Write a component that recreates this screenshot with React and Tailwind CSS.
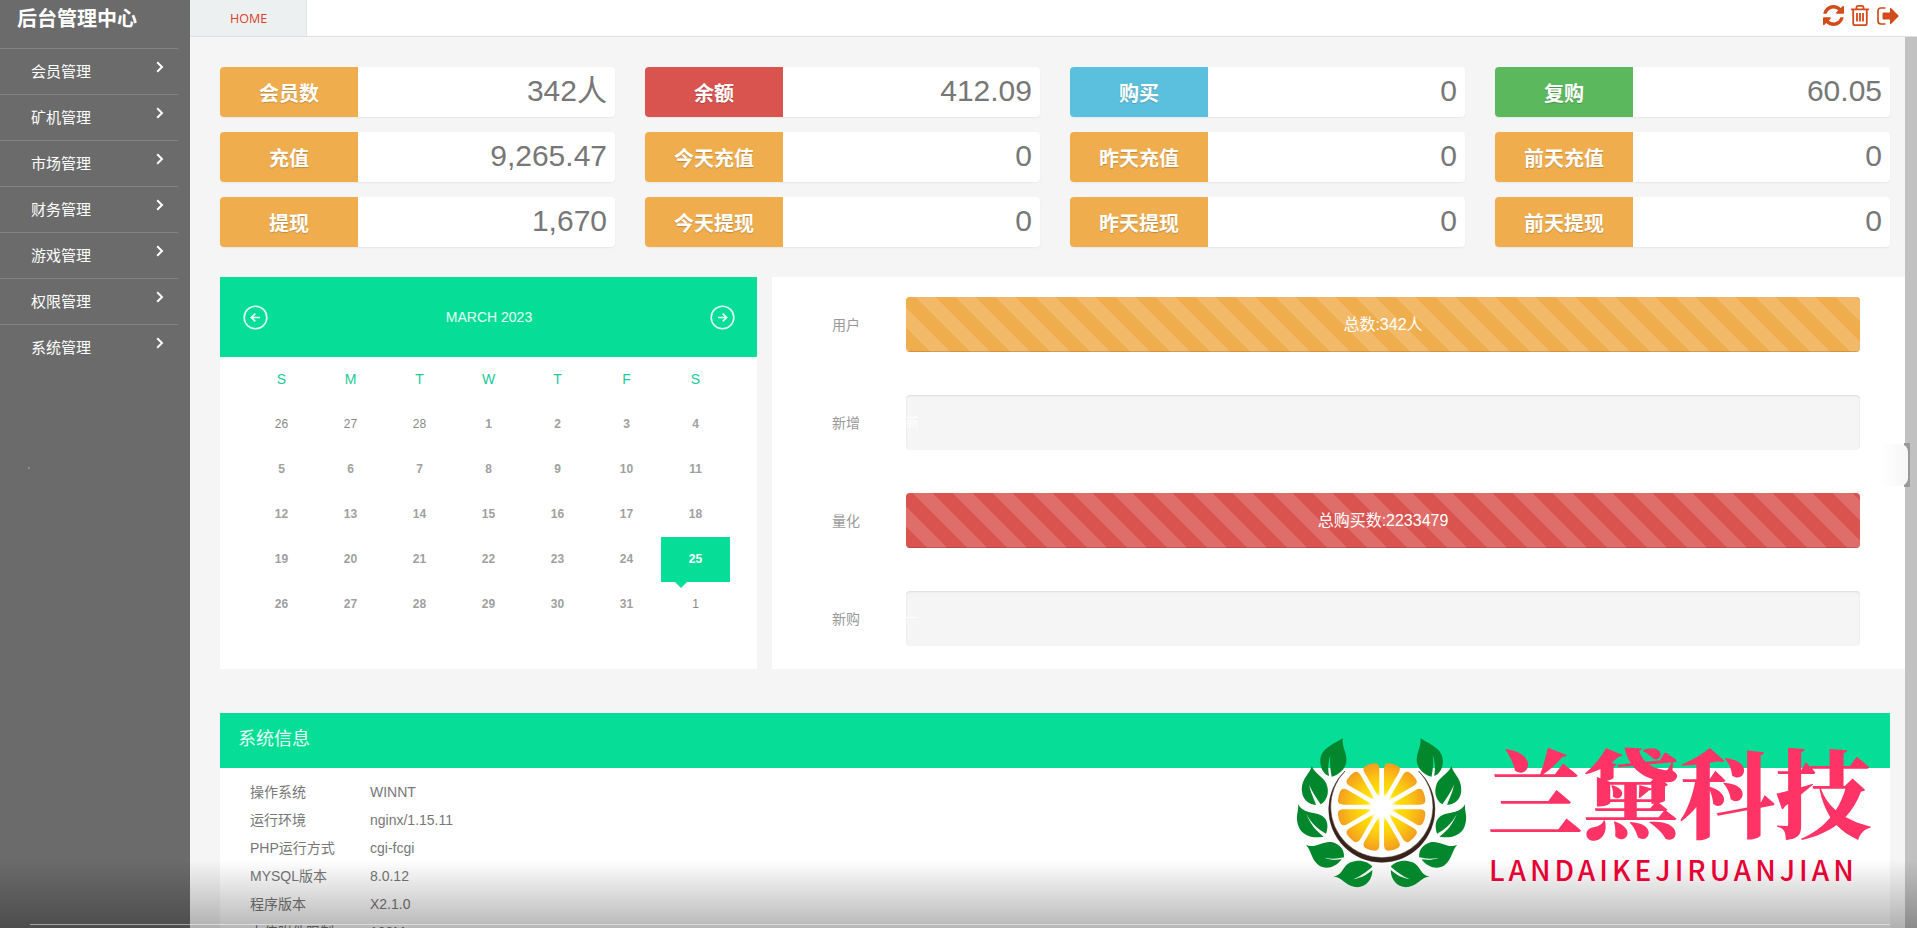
import React from "react";

const menu = ["会员管理", "矿机管理", "市场管理", "财务管理", "游戏管理", "权限管理", "系统管理"];

const stats = [
  ["会员数", "342人", "bg-[#f0ad4e]"],
  ["余额", "412.09", "bg-[#d9534f]"],
  ["购买", "0", "bg-[#5bc0de]"],
  ["复购", "60.05", "bg-[#5cb85c]"],
  ["充值", "9,265.47", "bg-[#f0ad4e]"],
  ["今天充值", "0", "bg-[#f0ad4e]"],
  ["昨天充值", "0", "bg-[#f0ad4e]"],
  ["前天充值", "0", "bg-[#f0ad4e]"],
  ["提现", "1,670", "bg-[#f0ad4e]"],
  ["今天提现", "0", "bg-[#f0ad4e]"],
  ["昨天提现", "0", "bg-[#f0ad4e]"],
  ["前天提现", "0", "bg-[#f0ad4e]"],
];

const days = [
  26, 27, 28, 1, 2, 3, 4, 5, 6, 7, 8, 9, 10, 11, 12, 13, 14, 15, 16, 17, 18, 19, 20, 21, 22, 23, 24,
  25, 26, 27, 28, 29, 30, 31, 1,
];

const info = [
  ["操作系统", "WINNT"],
  ["运行环境", "nginx/1.15.11"],
  ["PHP运行方式", "cgi-fcgi"],
  ["MYSQL版本", "8.0.12"],
  ["程序版本", "X2.1.0"],
  ["上传附件限制", "100M"],
];

const stripes =
  "bg-[linear-gradient(45deg,rgba(255,255,255,.15)_25%,transparent_25%,transparent_50%,rgba(255,255,255,.15)_50%,rgba(255,255,255,.15)_75%,transparent_75%,transparent)] bg-[length:40px_40px]";

function Chevron() {
  return (
    <svg className="h-3 w-2" viewBox="0 0 8 12" fill="none" stroke="#fff" strokeWidth="2">
      <path d="M1.2 1.2 6 6 1.2 10.8" />
    </svg>
  );
}

function CircleArrow({ flip }) {
  return (
    <svg className={flip ? "size-[25px] -scale-x-100" : "size-[25px]"} viewBox="0 0 25 25" fill="none" stroke="#e6fff5">
      <circle cx="12.5" cy="12.5" r="11.3" strokeWidth="1.6" />
      <path d="M17 12.5H8.8M12.3 8.6 8.4 12.5l3.9 3.9" strokeWidth="1.7" />
    </svg>
  );
}

function TopIcons() {
  return (
    <div className="flex items-center text-[#d24b1a]">
      <svg className="size-[21px]" viewBox="0 0 1536 1536" fill="currentColor">
        <path d="M1511 928q0 5-1 7-64 268-268 434.500t-478 166.500q-146 0-282.500-55t-243.500-157l-129 129q-19 19-45 19t-45-19-19-45v-448q0-26 19-45t45-19h448q26 0 45 19t19 45-19 45l-137 137q71 66 161 102t187 36q134 0 250-65t186-179q11-17 53-117 8-23 30-23h192q13 0 22.500 9.500t9.500 22.500zm25-800v448q0 26-19 45t-45 19h-448q-26 0-45-19t-19-45 19-45l138-138q-148-137-349-137-134 0-250 65t-186 179q-11 17-53 117-8 23-30 23h-199q-13 0-22.500-9.500t-9.500-22.500v-7q65-268 270-434.500t480-166.500q146 0 284 55.500t245 156.500l130-129q19-19 45-19t45 19 19 45z" />
      </svg>
      <svg className="ml-[7px] h-[21px] w-[18px]" viewBox="0 0 18 21" fill="none" stroke="currentColor" strokeWidth="1.8">
        <path d="M0 4.300h18M5.500 4V2.200Q5.700.9 7 .9h4q1.300 0 1.500 1.300V4M2.200 4.500v13.700q0 2 1.600 2h10.400q1.600 0 1.600-2V4.500M6 8v8.500M9 8v8.500M12 8v8.500" />
      </svg>
      <svg className="ml-2 h-[18px] w-[22px]" viewBox="0 0 22 18" fill="none" stroke="currentColor" strokeWidth="1.700">
        <path d="M8.500 1H4Q1 1 1 4v10q0 3 3 3h4.500" />
        <path d="M6.500 5.500H13V1.300q0-1 1-.4l7.200 7.400q.6.700 0 1.400L14 17q-1 .7-1-.4v-4.100H6.500q-1 0-1-1v-5q0-1 1-1z" fill="currentColor" stroke="none" />
      </svg>
    </div>
  );
}

function Leaves() {
  return (
    <>
      <path d="M188 40C160 58 118 72 121 112C122 135 135 150 147 153C143 130 145 110 151 90C149 115 150 130 155 155C180 150 203 125 199 98C197 78 186 65 188 40Z" />
      <path d="M95 122C92 145 62 160 66 200C68 222 85 238 108 240C102 220 92 205 88 180C98 205 112 222 122 238C140 228 147 205 142 185C136 155 105 150 95 122Z" />
      <path d="M54 237C58 255 44 275 56 305C66 330 95 342 131 335C110 318 92 300 79 266C95 298 115 312 138 326C146 305 143 285 130 275C108 258 72 270 54 237Z" />
      <path d="M78 360C95 378 92 400 115 420C135 435 165 430 185 403C165 405 150 405 133 398C155 403 172 402 192 397C194 375 180 358 158 352C130 345 108 372 78 360Z" />
      <path d="M160 455C185 455 195 480 225 486C255 490 278 465 277 435C260 450 245 458 220 463C243 452 258 442 277 425C265 408 235 402 212 412C185 425 190 450 160 455Z" />
    </>
  );
}

function Logo() {
  const angles = [15, 45, 75, 105, 135, 165, 195, 225, 255, 285, 315, 345];
  return (
    <svg className="h-[180px] w-[210px]" viewBox="0 0 630 540">
      <defs>
        <radialGradient id="pulp" gradientUnits="userSpaceOnUse" cx="0" cy="0" r="138">
          <stop offset=".2" stopColor="#fff6a0" />
          <stop offset=".36" stopColor="#ffe000" />
          <stop offset=".6" stopColor="#fccb10" />
          <stop offset="1" stopColor="#f3981f" />
        </radialGradient>
        <radialGradient id="core">
          <stop offset=".6" stopColor="#fff" />
          <stop offset="1" stopColor="#fff" stopOpacity="0" />
        </radialGradient>
      </defs>
      <path d="M195 138A159.300 159.300 0 1 0 416 138A153.500 153.500 0 1 1 195 138Z" fill="#38231b" stroke="#38231b" strokeWidth="1.5" />
      <g transform="translate(305 246)">
        {angles.map((a) => (
          <path key={a} transform={`rotate(${a})`} fill="url(#pulp)" d="M27 0L112 22.800Q129 27.500 132 14Q135 0 132-14Q129-27.500 112-22.800Z" />
        ))}
        <circle r="42" fill="url(#core)" />
      </g>
      <g fill="#02872d">
        <Leaves />
        <g transform="translate(609.500 0) scale(-1 1)">
          <Leaves />
        </g>
      </g>
    </svg>
  );
}

function BarRow({ label, children }) {
  return (
    <div className="flex h-[55px] items-center">
      <span className="w-[74px] text-sm text-[#999]">{label}</span>
      <div className="h-[55px] w-[954px] overflow-hidden rounded bg-[#f5f5f5] shadow-[inset_0_1px_2px_rgba(0,0,0,.1)]">{children}</div>
    </div>
  );
}

export default function App() {
  return (
    <div className="relative flex h-[928px] w-[1917px] overflow-hidden bg-[#f5f5f5] font-['Liberation_Sans','Noto_Sans_CJK_SC',sans-serif]">
      <aside className="w-[190px] shrink-0 bg-[#6b6b6b] text-white">
        <h1 className="flex h-12 pt-1 pl-[17px] text-xl leading-[30px] font-bold">后台管理中心</h1>
        <nav className="w-[178px]">
          {menu.map((m) => (
            <div key={m} className="flex h-[46px] justify-between border-t border-[#848484] pr-[14px] pl-[31px]">
              <span className="text-[15px] leading-[45px]">{m}</span>
              <span className="pt-3">
                <Chevron />
              </span>
            </div>
          ))}
        </nav>
      </aside>

      <main className="flex min-w-0 grow flex-col">
        <header className="flex h-[37px] shrink-0 items-start justify-between border-b border-[#dfe1e1] bg-white pr-[18px]">
          <div className="h-9 w-[117px] border-r border-[#e0e4e4] bg-[#ecf0f1] pl-10 font-['Open_Sans',sans-serif] text-[12.5px] leading-[37px] text-[#d9401f]">
            HOME
          </div>
          <div className="pt-[5px]">
            <TopIcons />
          </div>
        </header>

        <div className="flex min-h-0 grow">
          <div className="w-[1715px] shrink-0 pt-[30px] pl-[30px]">
            <section className="grid w-[1670px] grid-cols-4 gap-x-[30px] gap-y-[15px]">
              {stats.map(([label, value, color]) => (
                <div key={label} className="flex h-[50px] overflow-hidden rounded bg-white shadow-[0_1px_2px_rgba(0,0,0,.06)]">
                  <div className={`${color} w-[138px] pt-0.5 text-center text-xl leading-[50px] font-bold text-white [text-shadow:0_1px_1px_rgba(0,0,0,.2)]`}>
                    {label}
                  </div>
                  <div className="grow pr-2 text-right text-3xl leading-[48px] text-[#777]">{value}</div>
                </div>
              ))}
            </section>

            <section className="mt-[30px] flex h-[392px] gap-[15px]">
              <div className="w-[537px] bg-white">
                <div className="flex h-20 items-center justify-between bg-[#06dd97] pr-[22px] pl-[23px] text-sm text-[#e6fff5]">
                  <CircleArrow />
                  <span>MARCH 2023</span>
                  <CircleArrow flip />
                </div>
                <div className="mx-[27px] grid grid-cols-7 text-center">
                  {["S", "M", "T", "W", "T", "F", "S"].map((d, i) => (
                    <div key={i} className="text-sm leading-[45px] text-[#1bc99a]">
                      {d}
                    </div>
                  ))}
                  {days.map((d, i) =>
                    i === 27 ? (
                      <div key={i} className="relative bg-[#06dd97] text-xs leading-[45px] font-bold text-white">
                        {d}
                        <svg className="absolute top-full left-[14px] h-1.5 w-3" viewBox="0 0 12 6">
                          <path d="M0 0h12L6 6z" fill="#06dd97" />
                        </svg>
                      </div>
                    ) : (
                      <div key={i} className={i < 3 || i === 34 ? "text-xs leading-[45px] text-[#888]" : "text-xs leading-[45px] font-bold text-[#a0a0a0]"}>
                        {d}
                      </div>
                    )
                  )}
                </div>
              </div>

              <div className="flex grow flex-col gap-[43px] bg-white pt-5 pl-[60px]">
                <BarRow label="用户">
                  <div className={`${stripes} h-full bg-[#f0ad4e] bg-position-[10px_0] text-center leading-[55px] text-white shadow-[inset_0_-1px_0_rgba(0,0,0,.15)]`}>
                    总数:342人
                  </div>
                </BarRow>
                <BarRow label="新增">
                  <div className="text-[13px] leading-[55px] whitespace-nowrap text-white">新</div>
                </BarRow>
                <BarRow label="量化">
                  <div className={`${stripes} h-full bg-[#d9534f] bg-position-[7px_0] text-center leading-[55px] text-white shadow-[inset_0_-1px_0_rgba(0,0,0,.15)]`}>
                    总购买数:2233479
                  </div>
                </BarRow>
                <BarRow label="新购">
                  <div className="text-[11px] leading-[55px] text-white">一</div>
                </BarRow>
              </div>
            </section>

            <section className="mt-11 h-[215px] w-[1670px] overflow-hidden bg-white">
              <h2 className="h-[55px] bg-[#06dd97] pl-[18px] text-lg leading-[53px] text-[#e6fff5]">系统信息</h2>
              <div className="pt-[10px] pl-[30px] text-sm leading-7 text-[#777]">
                {info.map(([k, v]) => (
                  <div key={k} className="flex">
                    <span className="w-[120px]">{k}</span>
                    <span>{v}</span>
                  </div>
                ))}
              </div>
            </section>
          </div>
          <div className="grow bg-[#c1c1c1]" />
        </div>
      </main>

      <div className="absolute top-[443px] left-[1904px] h-11 w-1.5 bg-[#999]" />
      <div className="absolute top-[444px] left-[1880px] h-[42px] w-7 rounded-r-lg bg-linear-to-r from-white to-[#f6f6f6]" />
      <div className="absolute top-[467px] left-7 size-0.5 rounded-full bg-[#999]" />

      <div className="absolute inset-x-0 bottom-0 h-[68px] bg-linear-to-b from-transparent to-black/28" />
      <div className="absolute top-[924px] left-[30px] h-px w-[1860px] bg-white/50" />

      <div className="absolute top-[725px] left-[1280px] flex">
        <Logo />
        <div className="-ml-[3px] flex flex-col whitespace-nowrap">
          <div className="h-32 font-['Noto_Serif_CJK_SC','Noto_Sans_CJK_SC',serif] text-[96px] leading-[127px] font-black text-[#ff3366]">兰黛科技</div>
          <div className="pl-0.5 font-['Noto_Sans_CJK_SC',sans-serif] text-[28px] leading-8 font-medium tracking-[4px] text-[#e60033]">LANDAIKEJIRUANJIAN</div>
        </div>
      </div>
    </div>
  );
}
